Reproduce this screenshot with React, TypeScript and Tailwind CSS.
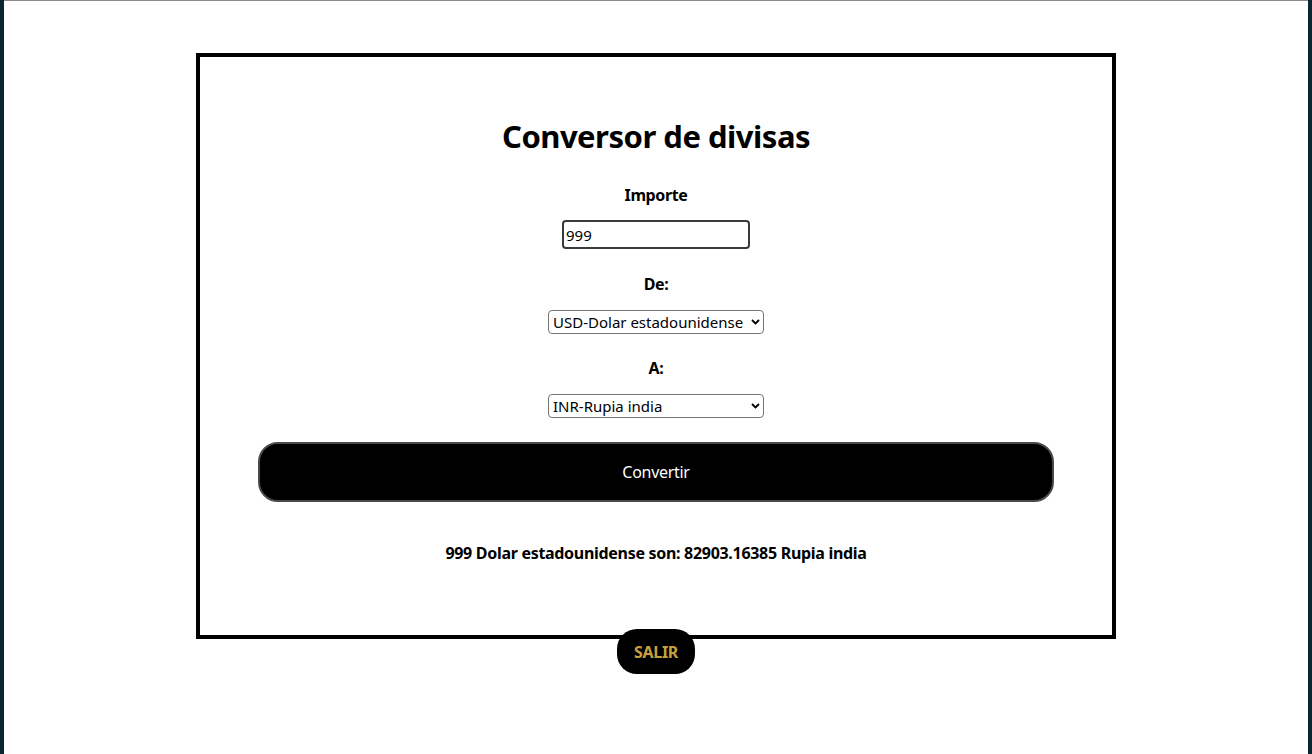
import { useState } from 'react';

const monedas = [
  { value: 'USD', label: 'USD-Dolar estadounidense' },
  { value: 'EUR', label: 'EUR-Euro' },
  { value: 'INR', label: 'INR-Rupia india' },
];

function Chevron() {
  return (
    <svg
      className="pointer-events-none absolute right-[4px] top-1/2 -translate-y-1/2"
      width="9"
      height="6"
      viewBox="0 0 9 6"
    >
      <path d="M1 1l3.5 3.5L8 1" fill="none" stroke="#000" strokeWidth="1.8" />
    </svg>
  );
}

function Selector({ value, onChange }: { value: string; onChange: (v: string) => void }) {
  return (
    <div className="relative w-[216px]">
      <select
        value={value}
        onChange={(e) => onChange(e.target.value)}
        className="w-full h-[24px] appearance-none rounded-[4px] border border-[#767676] bg-white pl-[4px] pr-[18px] text-[15px] leading-[22px] text-black outline-none"
      >
        {monedas.map((m) => (
          <option key={m.value} value={m.value}>
            {m.label}
          </option>
        ))}
      </select>
      <Chevron />
    </div>
  );
}

export default function App() {
  const [importe, setImporte] = useState('999');
  const [de, setDe] = useState('USD');
  const [a, setA] = useState('INR');

  return (
    <div
      className="flex h-[754px] w-full overflow-hidden bg-white"
      style={{ fontFamily: '"Noto Sans", "Open Sans", Arial, sans-serif' }}
    >
      {/* left edge of the window behind */}
      <div className="w-[4px] shrink-0 bg-[#0c2631]" />

      <main className="flex flex-1 flex-col items-center border-t border-[#8c8c8c] pt-[52px]">
        <div className="flex w-[920px] flex-col items-center border-4 border-black pb-[70px] pt-[59px]">
          <h1 className="text-[31px] font-bold leading-[40px] tracking-[-0.5px] text-black">Conversor de divisas</h1>

          <label className="mt-[27px] text-[16px] font-bold leading-[24px] tracking-[-0.4px] text-black">Importe</label>
          <input
            type="text"
            value={importe}
            onChange={(e) => setImporte(e.target.value)}
            className="mt-[13px] h-[29px] w-[188px] rounded-[4px] border-2 border-[#3a3a3a] px-[2px] text-[15px] text-black outline-none"
          />

          <label className="mt-[23px] text-[16px] font-bold leading-[24px] tracking-[-0.4px] text-black">De:</label>
          <div className="mt-[14px]">
            <Selector value={de} onChange={setDe} />
          </div>

          <label className="mt-[22px] text-[16px] font-bold leading-[24px] tracking-[-0.4px] text-black">A:</label>
          <div className="mt-[14px]">
            <Selector value={a} onChange={setA} />
          </div>

          <button className="mt-[24px] h-[60px] w-[796px] rounded-[20px] border-2 border-[#4a4a4a] bg-black text-[16px] tracking-[-0.3px] text-white">
            Convertir
          </button>

          <p className="mt-[39px] text-[16px] font-bold leading-[24px] tracking-[-0.3px] text-black">
            999 Dolar estadounidense son: 82903.16385 Rupia india
          </p>
        </div>

        <button className="-mt-[10px] h-[45px] w-[78px] rounded-[20px] bg-black text-[16px] font-bold tracking-[-0.3px] text-[#c9a03c]">
          SALIR
        </button>
      </main>

      <div className="w-[4px] shrink-0 bg-[#0c2631]" />
    </div>
  );
}
